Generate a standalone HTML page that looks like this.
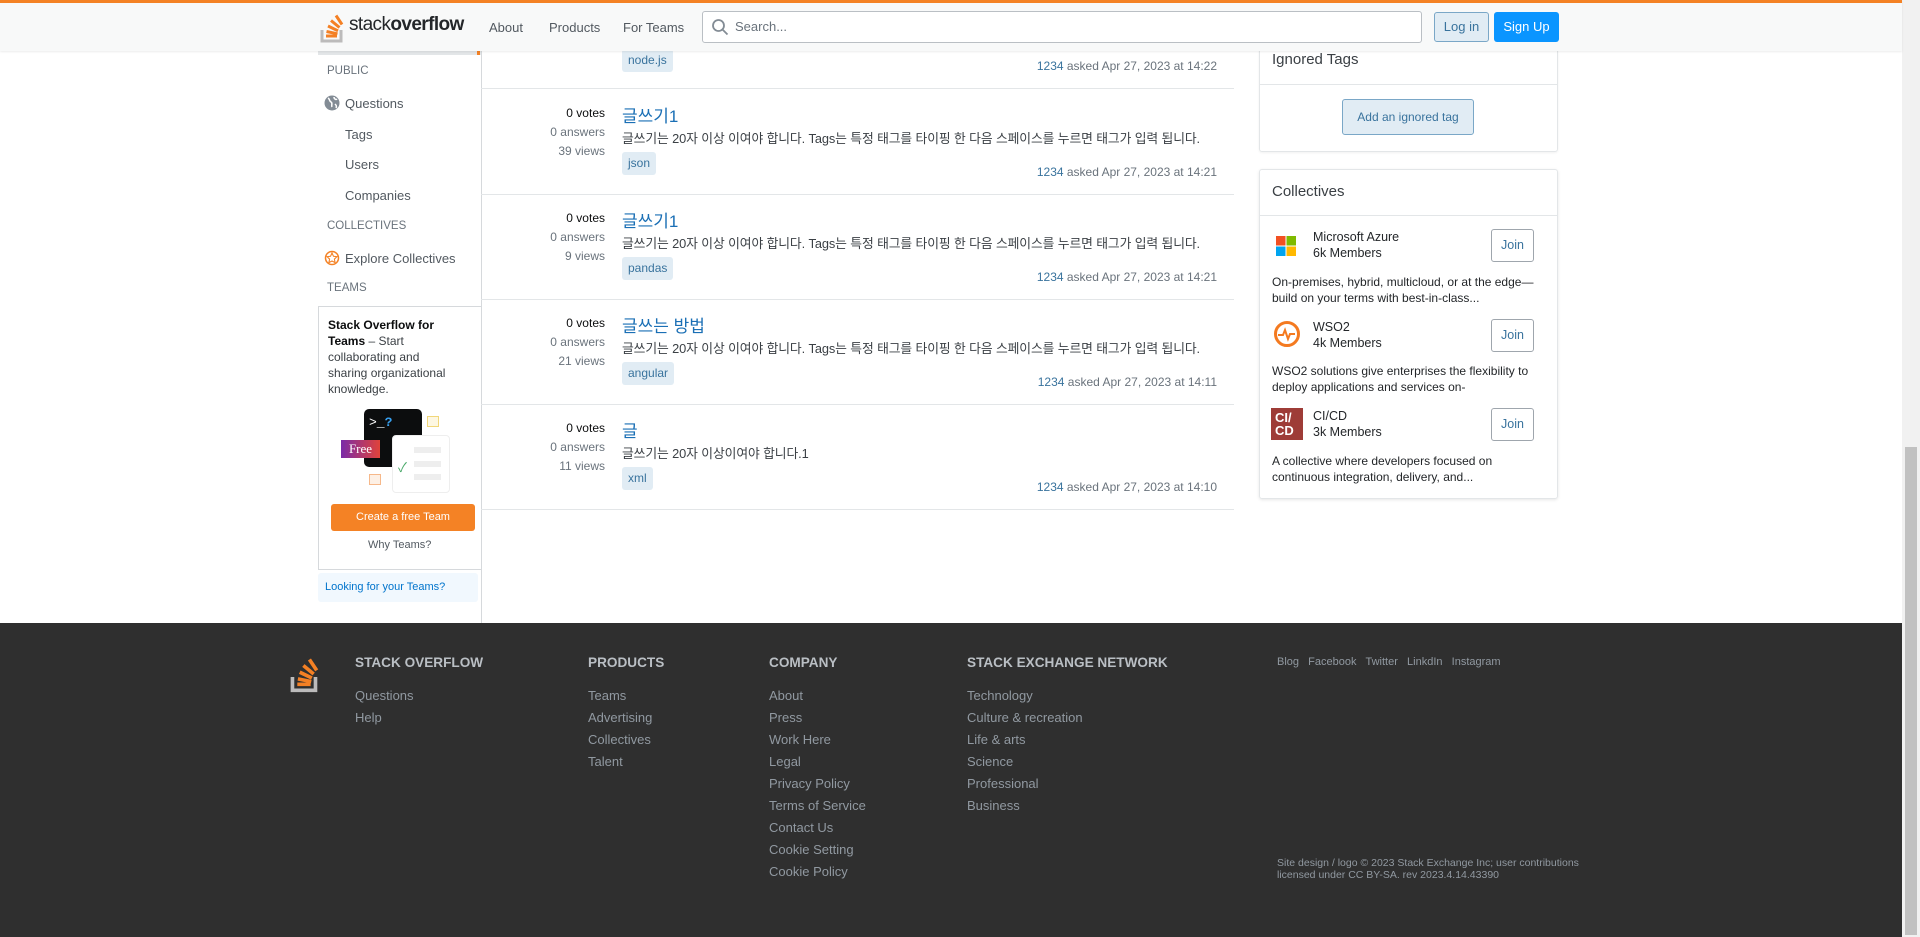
<!DOCTYPE html>
<html><head><meta charset="utf-8"><style>
*{box-sizing:border-box;margin:0;padding:0}
body{width:1920px;height:937px;overflow:hidden;background:#fff;font-family:"Liberation Sans","Noto Sans CJK KR",sans-serif;font-size:13px;color:#232629;position:relative}
.a{position:absolute;white-space:nowrap}
.hdr{position:absolute;left:0;top:0;width:1902px;height:51px;background:#f8f9f9;border-top:3px solid #f48225;box-shadow:0 1px 2px rgba(0,0,0,.08);z-index:5}
.nav{color:#525960;font-size:13px;top:17px}
.tag{position:absolute;background:#e1ecf4;color:#39739d;font-size:12px;padding:0 6px;height:23px;line-height:23px;border-radius:3px}
.stat{position:absolute;right:0;width:100px;text-align:right;font-size:12px;color:#6a737c}
.row{position:absolute;left:481px;width:753px;height:105px;border-bottom:1px solid #e3e6e8}
.title{position:absolute;left:141px;font-size:17px;color:#1a6fb5}
.ex{position:absolute;left:141px;font-size:12.8px;color:#3b4045;letter-spacing:-.1px}
.asked{position:absolute;right:17px;font-size:12px;color:#6a737c}
.asked b{font-weight:normal;color:#39739d}
.side{color:#525960;font-size:13px;left:345px}
.sh{color:#6a737c;font-size:11.5px;left:327px}
.fh{color:#babfc4;font-weight:bold;font-size:13.6px;top:655px}
.fl{color:#9199a1;font-size:13px}
.join{position:absolute;left:1491px;width:43px;height:33px;border:1px solid #9fa6ad;border-radius:3px;color:#39739d;font-size:12.5px;text-align:center;line-height:31px;background:#fff}
</style></head><body>
<div class="hdr">
 <svg class="a" style="left:320px;top:8px" width="28" height="33" viewBox="0 0 28 33"><path d="M2 19v11h19V19" fill="none" stroke="#bcbbbb" stroke-width="3"/><g stroke="#f48024" stroke-width="3"><path d="M6 25h11"/><path d="M6.5 20.5l11 2.3"/><path d="M8 15l10 4.8"/><path d="M11 9.5l8.5 7"/><path d="M16 4.5l6 9"/></g></svg>
 <div class="a" style="left:349px;top:11px;font-size:19px;color:#232629;letter-spacing:-.6px">stack<b>overflow</b></div>
 <div class="a nav" style="left:489px">About</div>
 <div class="a nav" style="left:549px">Products</div>
 <div class="a nav" style="left:623px">For Teams</div>
 <div class="a" style="left:702px;top:8px;width:720px;height:32px;border:1px solid #babfc4;border-radius:3px;background:#fff"></div>
 <svg class="a" style="left:711px;top:15px" width="18" height="18" viewBox="0 0 18 18"><circle cx="7.5" cy="7.5" r="5.5" fill="none" stroke="#838c95" stroke-width="1.8"/><path d="M11.5 11.5l5 5" stroke="#838c95" stroke-width="1.8"/></svg>
 <div class="a" style="left:735px;top:16px;color:#6a737c">Search...</div>
 <div class="a" style="left:1434px;top:9px;width:55px;height:30px;background:#e1ecf4;border:1px solid #7aa7c7;border-radius:3px;color:#39739d;text-align:center;line-height:28px">Log in</div>
 <div class="a" style="left:1494px;top:9px;width:65px;height:30px;background:#0a95ff;border-radius:3px;color:#fff;text-align:center;line-height:30px">Sign Up</div>
</div>
<!-- left sidebar -->
<div class="a" style="left:481px;top:51px;width:1px;height:572px;background:#d6d9dc"></div>
<div class="a" style="left:318px;top:51px;width:163px;height:4px;background:#e3e6e8"></div>
<div class="a" style="left:477px;top:51px;width:3px;height:4px;background:#f48225"></div>
<div class="a sh" style="top:65px">PUBLIC</div>
<svg class="a" style="left:324px;top:95px" width="16" height="16" viewBox="0 0 16 16"><circle cx="8" cy="8" r="7.5" fill="#838c95"/><path d="M4 3c2 1 1 3 3 4s0 3 1 5M10 2c0 2 2 3 3 2M11 9c1 1 2 2 1 4" stroke="#fff" stroke-width="1.5" fill="none"/></svg>
<div class="a side" style="top:96px">Questions</div>
<div class="a side" style="top:127px">Tags</div>
<div class="a side" style="top:157px">Users</div>
<div class="a side" style="top:188px">Companies</div>
<div class="a sh" style="top:220px">COLLECTIVES</div>
<svg class="a" style="left:324px;top:250px" width="16" height="16" viewBox="0 0 16 16"><circle cx="8" cy="8" r="6.5" fill="none" stroke="#f48225" stroke-width="1.5"/><path d="M8 3l1.5 3.3 3.5.4-2.6 2.4.7 3.5L8 11l-3.1 1.6.7-3.5L3 6.7l3.5-.4z" fill="none" stroke="#f48225" stroke-width="1.1"/></svg>
<div class="a side" style="top:251px">Explore Collectives</div>
<div class="a sh" style="top:282px">TEAMS</div>
<div class="a" style="left:318px;top:306px;width:163px;height:264px;border:1px solid #d6d9dc;border-right:none;background:#fff"></div>
<div class="a" style="left:328px;top:317px;font-size:12px;line-height:16px;color:#3b4045;white-space:normal;width:126px"><b style="color:#0c0d0e">Stack Overflow for Teams</b> – Start collaborating and sharing organizational knowledge.</div>
<div class="a" style="left:364px;top:409px;width:58px;height:58px;background:#0c0d0e;border-radius:5px"></div>
<div class="a" style="left:369px;top:415px;color:#fff;font-family:'Liberation Mono',monospace;font-size:13px">&gt;_<span style="color:#379fef;font-weight:bold">?</span></div>
<div class="a" style="left:392px;top:435px;width:58px;height:58px;background:#fff;border:1px solid #eee;border-radius:4px"></div>
<div class="a" style="left:414px;top:447px;width:27px;height:6px;background:#eee"></div>
<div class="a" style="left:414px;top:461px;width:27px;height:6px;background:#eee"></div>
<div class="a" style="left:414px;top:474px;width:27px;height:6px;background:#eee"></div>
<div class="a" style="left:398px;top:457px;color:#48a868;font-size:13px">✓</div>
<div class="a" style="left:341px;top:440px;width:39px;height:18px;background:linear-gradient(90deg,#7a2ba8,#e0433a);color:#fff;font-family:'Liberation Serif',serif;font-size:13px;text-align:center;line-height:18px">Free</div>
<div class="a" style="left:427px;top:416px;width:12px;height:11px;border:1.5px solid #f1d77a;background:#fdf7e2"></div>
<div class="a" style="left:369px;top:474px;width:12px;height:11px;border:1.5px solid #f6b88a;background:#fdf0e5"></div>
<div class="a" style="left:331px;top:504px;width:144px;height:27px;background:#f48225;border-radius:3px;color:#fff;font-size:11px;text-align:center;line-height:27px">Create a free Team</div>
<div class="a" style="left:368px;top:539px;font-size:11px;color:#525960">Why Teams?</div>
<div class="a" style="left:318px;top:573px;width:160px;height:29px;background:#f1f8fe;border-radius:3px"></div>
<div class="a" style="left:325px;top:581px;font-size:11px;color:#0074cc">Looking for your Teams?</div>
<!-- main rows -->
<div class="row" style="top:51px;height:38px">
 <div class="tag" style="left:141px;top:-2px">node.js</div>
 <div class="asked" style="top:8px"><b>1234</b> asked Apr 27, 2023 at 14:22</div>
</div>
<div class="row" style="top:90px">
 <div class="stat" style="left:24px;top:16px;color:#0c0d0e">0 votes</div>
 <div class="stat" style="left:24px;top:35px">0 answers</div>
 <div class="stat" style="left:24px;top:54px">39 views</div>
 <div class="title" style="top:12px">글쓰기1</div>
 <div class="ex" style="top:38px">글쓰기는 20자 이상 이여야 합니다. Tags는 특정 태그를 타이핑 한 다음 스페이스를 누르면 태그가 입력 됩니다.</div>
 <div class="tag" style="left:141px;top:62px">json</div>
 <div class="asked" style="top:75px"><b>1234</b> asked Apr 27, 2023 at 14:21</div>
</div>
<div class="row" style="top:195px">
 <div class="stat" style="left:24px;top:16px;color:#0c0d0e">0 votes</div>
 <div class="stat" style="left:24px;top:35px">0 answers</div>
 <div class="stat" style="left:24px;top:54px">9 views</div>
 <div class="title" style="top:12px">글쓰기1</div>
 <div class="ex" style="top:38px">글쓰기는 20자 이상 이여야 합니다. Tags는 특정 태그를 타이핑 한 다음 스페이스를 누르면 태그가 입력 됩니다.</div>
 <div class="tag" style="left:141px;top:62px">pandas</div>
 <div class="asked" style="top:75px"><b>1234</b> asked Apr 27, 2023 at 14:21</div>
</div>
<div class="row" style="top:300px">
 <div class="stat" style="left:24px;top:16px;color:#0c0d0e">0 votes</div>
 <div class="stat" style="left:24px;top:35px">0 answers</div>
 <div class="stat" style="left:24px;top:54px">21 views</div>
 <div class="title" style="top:12px">글쓰는 방법</div>
 <div class="ex" style="top:38px">글쓰기는 20자 이상 이여야 합니다. Tags는 특정 태그를 타이핑 한 다음 스페이스를 누르면 태그가 입력 됩니다.</div>
 <div class="tag" style="left:141px;top:62px">angular</div>
 <div class="asked" style="top:75px"><b>1234</b> asked Apr 27, 2023 at 14:11</div>
</div>
<div class="row" style="top:405px">
 <div class="stat" style="left:24px;top:16px;color:#0c0d0e">0 votes</div>
 <div class="stat" style="left:24px;top:35px">0 answers</div>
 <div class="stat" style="left:24px;top:54px">11 views</div>
 <div class="title" style="top:12px">글</div>
 <div class="ex" style="top:38px">글쓰기는 20자 이상이여야 합니다.1</div>
 <div class="tag" style="left:141px;top:62px">xml</div>
 <div class="asked" style="top:75px"><b>1234</b> asked Apr 27, 2023 at 14:10</div>
</div>
<!-- right sidebar -->
<div class="a" style="left:1259px;top:30px;width:299px;height:122px;border:1px solid #e3e6e8;border-radius:3px;box-shadow:0 1px 2px rgba(0,0,0,.06)"></div>
<div class="a" style="left:1272px;top:51px;font-size:15px;color:#3b4045">Ignored Tags</div>
<div class="a" style="left:1260px;top:84px;width:297px;height:1px;background:#e3e6e8"></div>
<div class="a" style="left:1342px;top:99px;width:132px;height:36px;background:#e1ecf4;border:1px solid #7aa7c7;border-radius:3px;color:#39739d;font-size:12px;text-align:center;line-height:34px">Add an ignored tag</div>
<div class="a" style="left:1259px;top:169px;width:299px;height:330px;border:1px solid #e3e6e8;border-radius:3px;box-shadow:0 1px 3px rgba(0,0,0,.1)"></div>
<div class="a" style="left:1272px;top:183px;font-size:15px;color:#3b4045">Collectives</div>
<div class="a" style="left:1260px;top:215px;width:297px;height:1px;background:#e3e6e8"></div>
<svg class="a" style="left:1276px;top:236px" width="20" height="20"><rect width="9.5" height="9.5" fill="#f25022"/><rect x="10.5" width="9.5" height="9.5" fill="#7fba00"/><rect y="10.5" width="9.5" height="9.5" fill="#00a4ef"/><rect x="10.5" y="10.5" width="9.5" height="9.5" fill="#ffb900"/></svg>
<div class="a" style="left:1313px;top:230px;font-size:12.5px">Microsoft Azure</div>
<div class="a" style="left:1313px;top:246px;font-size:12.5px">6k Members</div>
<div class="join" style="top:229px">Join</div>
<div class="a" style="left:1272px;top:274px;font-size:12px;line-height:16px;color:#232629">On-premises, hybrid, multicloud, or at the edge—<br>build on your terms with best-in-class...</div>
<svg class="a" style="left:1273px;top:320px" width="28" height="28" viewBox="0 0 28 28"><circle cx="14" cy="14" r="11.5" fill="none" stroke="#f47a20" stroke-width="3"/><path d="M5 15h5l2-5 3 9 2-5h5" fill="none" stroke="#f47a20" stroke-width="2"/></svg>
<div class="a" style="left:1313px;top:320px;font-size:12.5px">WSO2</div>
<div class="a" style="left:1313px;top:336px;font-size:12.5px">4k Members</div>
<div class="join" style="top:319px">Join</div>
<div class="a" style="left:1272px;top:363px;font-size:12px;line-height:16px">WSO2 solutions give enterprises the flexibility to<br>deploy applications and services on-</div>
<div class="a" style="left:1271px;top:408px;width:32px;height:32px;background:#9e3c37;color:#fff;font-size:13px;font-weight:bold;line-height:13px;padding:3px 0 0 4px;white-space:normal">CI/<br>CD</div>
<div class="a" style="left:1313px;top:409px;font-size:12.5px">CI/CD</div>
<div class="a" style="left:1313px;top:425px;font-size:12.5px">3k Members</div>
<div class="join" style="top:408px">Join</div>
<div class="a" style="left:1272px;top:453px;font-size:12px;line-height:16px">A collective where developers focused on<br>continuous integration, delivery, and...</div>
<!-- footer -->
<div class="a" style="left:0;top:623px;width:1902px;height:314px;background:#2f2f2f"></div>
<svg class="a" style="left:290px;top:654px" width="34" height="40" viewBox="0 0 28 33"><path d="M2 19v11h19V19" fill="none" stroke="#bcbbbb" stroke-width="3"/><g stroke="#f48024" stroke-width="3"><path d="M6 25h11"/><path d="M6.5 20.5l11 2.3"/><path d="M8 15l10 4.8"/><path d="M11 9.5l8.5 7"/><path d="M16 4.5l6 9"/></g></svg>
<div class="a fh" style="left:355px">STACK OVERFLOW</div>
<div class="a fh" style="left:588px">PRODUCTS</div>
<div class="a fh" style="left:769px">COMPANY</div>
<div class="a fh" style="left:967px">STACK EXCHANGE NETWORK</div>
<div class="a fl" style="left:355px;top:685px;line-height:22px">Questions<br>Help</div>
<div class="a fl" style="left:588px;top:685px;line-height:22px">Teams<br>Advertising<br>Collectives<br>Talent</div>
<div class="a fl" style="left:769px;top:685px;line-height:22px">About<br>Press<br>Work Here<br>Legal<br>Privacy Policy<br>Terms of Service<br>Contact Us<br>Cookie Setting<br>Cookie Policy</div>
<div class="a fl" style="left:967px;top:685px;line-height:22px">Technology<br>Culture &amp; recreation<br>Life &amp; arts<br>Science<br>Professional<br>Business</div>
<div class="a fl" style="left:1277px;top:656px;font-size:11px">Blog&nbsp;&nbsp; Facebook&nbsp;&nbsp; Twitter&nbsp;&nbsp; LinkdIn&nbsp;&nbsp; Instagram</div>
<div class="a fl" style="left:1277px;top:857px;font-size:10.5px;line-height:12px">Site design / logo © 2023 Stack Exchange Inc; user contributions<br>licensed under CC BY-SA. rev 2023.4.14.43390</div>
<!-- scrollbar -->
<div class="a" style="left:1902px;top:0;width:18px;height:937px;background:#f1f1f1"></div>
<div class="a" style="left:1905px;top:447px;width:12px;height:488px;background:#c1c1c1"></div>
</body></html>
